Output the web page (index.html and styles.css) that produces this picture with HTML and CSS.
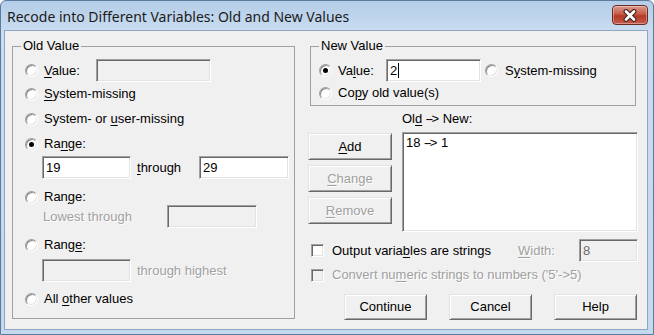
FILE: index.html
```html
<!DOCTYPE html>
<html lang="en">
<head>
  <meta charset="UTF-8">
  <meta name="viewport" content="width=device-width, initial-scale=1.0">
  <title>Old and New Values</title>
  <link rel="stylesheet" href="styles.css">
</head>
<body>
  <div class="window">
    <div class="titlebar">
      <span class="title">Recode into Different Variables: Old and New Values</span>
      <button class="close" aria-label="Close">
        <svg width="16" height="13" viewBox="0 0 16 13">
          <path d="M4 2.5 L12 10.5 M12 2.5 L4 10.5" stroke="#4a2a26" stroke-width="5" stroke-linecap="round" fill="none"/>
          <path d="M4 2.5 L12 10.5 M12 2.5 L4 10.5" stroke="#fff" stroke-width="2.6" stroke-linecap="round" fill="none"/>
        </svg>
      </button>
    </div>

    <div class="client">
      <!-- left: old value -->
      <fieldset class="group old-value">
        <legend>Old Value</legend>
        <div class="row field-row mt5">
          <span class="radio"></span>
          <span class="lbl-value"><u>V</u>alue:</span>
          <span class="field disabled w-value"></span>
        </div>
        <div class="row mt4"><span class="radio"></span><span><u>S</u>ystem-missing</span></div>
        <div class="row mt9"><span class="radio"></span><span>System- or <u>u</u>ser-missing</span></div>
        <div class="row mt9"><span class="radio checked"></span><span>Ra<u>n</u>ge:</span></div>
        <div class="row field-row mt4 indent">
          <span class="field w-range">19</span>
          <span class="lbl-through"><u>t</u>hrough</span>
          <span class="field w-range2">29</span>
        </div>
        <div class="row mt10"><span class="radio"></span><span>Ran<u>g</u>e:</span></div>
        <div class="row field-row indent-text">
          <span class="lbl-lowest dim">Lowest through</span>
          <span class="field disabled w-range2"></span>
        </div>
        <div class="row mt9"><span class="radio"></span><span>Rang<u>e</u>:</span></div>
        <div class="row field-row mt6 indent">
          <span class="field disabled w-range"></span>
          <span class="lbl-highest dim">through highest</span>
        </div>
        <div class="row mt9"><span class="radio"></span><span>All <u>o</u>ther values</span></div>
      </fieldset>

      <!-- right: new value and list -->
      <div class="side">
        <fieldset class="group new-value">
          <legend>New Value</legend>
          <div class="row field-row mt5">
            <span class="radio checked"></span>
            <span class="lbl-newvalue">Va<u>l</u>ue:</span>
            <span class="field w-newvalue">2<span class="caret"></span></span>
            <span class="radio sysmis"></span>
            <span>S<u>y</u>stem-missing</span>
          </div>
          <div class="row mt3"><span class="radio"></span><span>Co<u>p</u>y old value(s)</span></div>
        </fieldset>

        <div class="mapping">
          <span class="list-label">Ol<u>d</u> <span class="arrow">--&gt;</span> New:</span>
          <div class="mapping-buttons">
            <button class="btn"><u>A</u>dd</button>
            <button class="btn dim"><u>C</u>hange</button>
            <button class="btn dim"><u>R</u>emove</button>
          </div>
          <div class="listbox">
            <div class="list-item">18 <span class="arrow">--&gt;</span> 1</div>
          </div>
        </div>

        <div class="row option-row mt7">
          <span class="checkbox"></span>
          <span class="grow">Output varia<u>b</u>les are strings</span>
          <span class="lbl-width dim"><u>W</u>idth:</span>
          <span class="field disabled w-width">8</span>
        </div>
        <div class="row option-row mt5">
          <span class="checkbox disabled"></span>
          <span class="dim">Convert nu<u>m</u>eric strings to numbers ('5'-&gt;5)</span>
        </div>

        <div class="actions">
          <button class="btn">Continue</button>
          <button class="btn">Cancel</button>
          <button class="btn">Help</button>
        </div>
      </div>
    </div>
  </div>
</body>
</html>
```

FILE: styles.css
```css
* {
  margin: 0;
  padding: 0;
  box-sizing: border-box;
}

body {
  width: 654px;
  height: 335px;
  overflow: hidden;
  background: #fff;
  font-family: 'Liberation Sans', Arial, sans-serif;
  font-size: 13px;
  line-height: 16px;
  color: #000;
}

u {
  text-decoration: underline;
  text-underline-offset: 2px;
}

/* window frame */
.window {
  width: 654px;
  height: 335px;
  display: flex;
  flex-direction: column;
  background: linear-gradient(#b4cde8, #c9dcf0 30px, #c4d8ee);
  border: 1px solid #5c7a9c;
  border-radius: 6px 6px 0 0;
}

.titlebar {
  height: 29px;
  display: flex;
  align-items: flex-start;
  justify-content: space-between;
  padding: 0 5px 0 6px;
}

.title {
  font-family: 'Noto Sans', sans-serif;
  font-size: 14px;
  line-height: 16px;
  margin-top: 8px;
  color: #1b1b1b;
}

.close {
  width: 36px;
  height: 20px;
  margin-top: 4px;
  display: flex;
  align-items: center;
  justify-content: center;
  border: 1px solid #6b2a22;
  border-radius: 4px;
  background: linear-gradient(#dc9a8c, #c65a47 45%, #b13a26 55%, #c9584a);
  box-shadow: inset 0 0 0 1px rgba(255, 255, 255, 0.35);
}

.client {
  flex: 1;
  display: flex;
  align-items: flex-start;
  margin: 0 5px 4px 3px;
  padding: 7px 0 0 7px;
  background: #f0f0f0;
  border: 1px solid #8fa6c0;
}

/* group boxes */
.group {
  border: 1px solid #a0a0a0;
  padding: 0 0 11px 8px;
}

.group legend {
  padding: 0 2px;
  line-height: 16px;
}

.old-value {
  width: 283px;
}

.old-value .row {
  margin-left: 4px;
}

.row {
  display: flex;
  align-items: center;
  height: 16px;
  white-space: nowrap;
}

.field-row {
  height: 23px;
}

.mt3 { margin-top: 3px; }
.mt4 { margin-top: 4px; }
.mt5 { margin-top: 5px; }
.mt6 { margin-top: 6px; }
.mt7 { margin-top: 7px; }
.mt9 { margin-top: 9px; }
.mt10 { margin-top: 10px; }

.old-value .indent {
  padding-left: 17px;
}

.old-value .indent-text {
  padding-left: 18px;
}

/* classic controls */
.radio {
  width: 13px;
  height: 13px;
  flex: none;
  margin-right: 6px;
  border-radius: 50%;
  background: #fff;
  border: 1px solid;
  border-color: #a0a0a0 #fff #fff #a0a0a0;
  box-shadow: inset 1px 1px #8a8a8a, inset -1px -1px #e3e3e3;
  display: flex;
  align-items: center;
  justify-content: center;
}

.radio.checked::after {
  content: '';
  width: 5px;
  height: 5px;
  border-radius: 50%;
  background: #000;
}

.checkbox {
  width: 13px;
  height: 13px;
  flex: none;
  margin-right: 8px;
  background: #fff;
  border: 1px solid;
  border-color: #a0a0a0 #fff #fff #a0a0a0;
  box-shadow: inset 1px 1px #696969, inset -1px -1px #e3e3e3;
}

.checkbox.disabled {
  background: #f0f0f0;
}

.field {
  height: 23px;
  flex: none;
  display: flex;
  align-items: center;
  padding: 0 3px;
  background: #fff;
  border: 1px solid;
  border-color: #a0a0a0 #fff #fff #a0a0a0;
  box-shadow: inset 1px 1px #696969, inset -1px -1px #e3e3e3;
}

.field.disabled {
  background: #f0f0f0;
  color: #6d6d6d;
}

.caret {
  width: 1px;
  height: 15px;
  margin-left: 1px;
  background: #000;
}

.dim {
  color: #a0a0a0;
  text-shadow: 1px 1px #fff;
}

.w-value { width: 115px; }
.w-range { width: 89px; }
.w-range2 { width: 90px; }
.w-newvalue { width: 95px; margin-right: 4px; }
.w-width { width: 59px; }

.lbl-value { width: 52px; }
.lbl-through { width: 62px; margin-left: 6px; }
.lbl-lowest { width: 124px; }
.lbl-highest { margin-left: 6px; }
.lbl-newvalue { width: 48px; }
.lbl-width { width: 61px; }

.sysmis {
  margin-right: 7px;
}

.arrow {
  letter-spacing: -1.5px;
  margin-right: 1.5px;
}

/* right column */
.side {
  width: 330px;
  margin-left: 13px;
}

.new-value {
  width: 326px;
  margin-left: 2px;
  padding-bottom: 4px;
}

.mapping {
  display: grid;
  grid-template-columns: 84px 236px;
  column-gap: 10px;
}

.list-label {
  grid-column: 2;
  margin: 5px 0 5px 0;
  height: 16px;
}

.mapping-buttons {
  display: flex;
  flex-direction: column;
  gap: 5px;
  margin-top: 1px;
}

.btn {
  height: 27px;
  font: inherit;
  color: #000;
  background: #f0f0f0;
  border: 1px solid;
  border-color: #e3e3e3 #696969 #696969 #e3e3e3;
  box-shadow: inset 1px 1px #fff, inset -1px -1px #a0a0a0;
}

.btn.dim {
  color: #a0a0a0;
}

.listbox {
  height: 100px;
  background: #fff;
  border: 1px solid;
  border-color: #a0a0a0 #fff #fff #a0a0a0;
  box-shadow: inset 1px 1px #696969, inset -1px -1px #e3e3e3;
  padding: 2px 0 0 3px;
}

.option-row {
  padding-left: 3px;
}

.option-row.mt7 {
  height: 23px;
}

.grow {
  flex: 1;
}

.actions {
  display: flex;
  justify-content: flex-end;
  gap: 22px;
  margin: 11px 1px 0 0;
}

.actions .btn {
  width: 83px;
  height: 26px;
}
```
